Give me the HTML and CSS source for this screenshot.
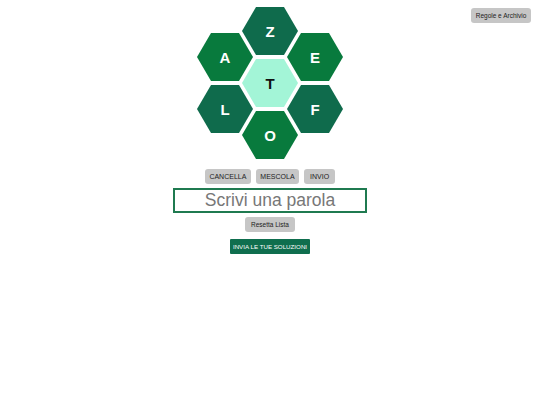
FILE: index.html
```html
<!DOCTYPE html>
<html lang="it">
<head>
<meta charset="utf-8">
<title>Alveare</title>
<link rel="stylesheet" href="styles.css">
</head>
<body>
<button class="btn rules">Regole e Archivio</button>
<main class="game">
  <div class="hive">
    <div class="hex dark" style="left:45px;top:0">Z</div>
    <div class="hex bright" style="left:0;top:26px">A</div>
    <div class="hex bright" style="left:90px;top:26px">E</div>
    <div class="hex center" style="left:45px;top:52px">T</div>
    <div class="hex dark" style="left:0;top:78px">L</div>
    <div class="hex dark" style="left:90px;top:78px">F</div>
    <div class="hex bright" style="left:45px;top:104px">O</div>
  </div>
  <div class="controls">
    <button class="btn ctl">CANCELLA</button>
    <button class="btn ctl">MESCOLA</button>
    <button class="btn ctl">INVIO</button>
  </div>
  <div class="word">Scrivi una parola</div>
  <button class="btn reset">Resetta Lista</button>
  <button class="submit">INVIA LE TUE SOLUZIONI</button>
</main>
</body>
</html>
```
FILE: styles.css
```css
html, body {
  margin: 0;
  padding: 0;
  background: #ffffff;
  font-family: "Liberation Sans", Arial, sans-serif;
}

.game {
  display: flex;
  flex-direction: column;
  align-items: center;
  padding-top: 7px;
}

.hive {
  position: relative;
  width: 146px;
  height: 152px;
}

.hex {
  position: absolute;
  width: 56px;
  height: 48px;
  clip-path: polygon(25% 0, 75% 0, 100% 50%, 75% 100%, 25% 100%, 0 50%);
  display: flex;
  align-items: center;
  justify-content: center;
  font-weight: bold;
  font-size: 15px;
  color: #ffffff;
}

.hex.dark { background: #0f6b4c; }
.hex.bright { background: #087a3d; }
.hex.center { background: #a3f5d7; color: #111111; }

.controls {
  display: flex;
  gap: 5px;
  margin-top: 10px;
}

.btn {
  font-family: "Liberation Sans", Arial, sans-serif;
  font-size: 6.5px;
  color: #222222;
  background: #c6c6c6;
  border: none;
  border-radius: 3px;
  height: 15px;
  padding: 0 5.5px;
  line-height: 15px;
  margin: 0;
}

.ctl {
  font-size: 7px;
  padding: 0 4.5px;
  min-width: 31px;
}

.word {
  box-sizing: border-box;
  width: 194px;
  height: 25px;
  margin-top: 4px;
  border: 2px solid #1f7a50;
  color: #777777;
  font-size: 17.5px;
  line-height: 21px;
  text-align: center;
}

.reset {
  margin-top: 4px;
  width: 50px;
  padding: 0;
}

.submit {
  margin-top: 7px;
  font-family: "Liberation Sans", Arial, sans-serif;
  font-size: 6.2px;
  color: #ffffff;
  background: #0f6e4e;
  border: none;
  border-radius: 1px;
  height: 15px;
  width: 80px;
  padding: 0;
  line-height: 15px;
  white-space: nowrap;
}

.rules {
  position: absolute;
  top: 8px;
  right: 9px;
  width: 60px;
  padding: 0;
}
```
